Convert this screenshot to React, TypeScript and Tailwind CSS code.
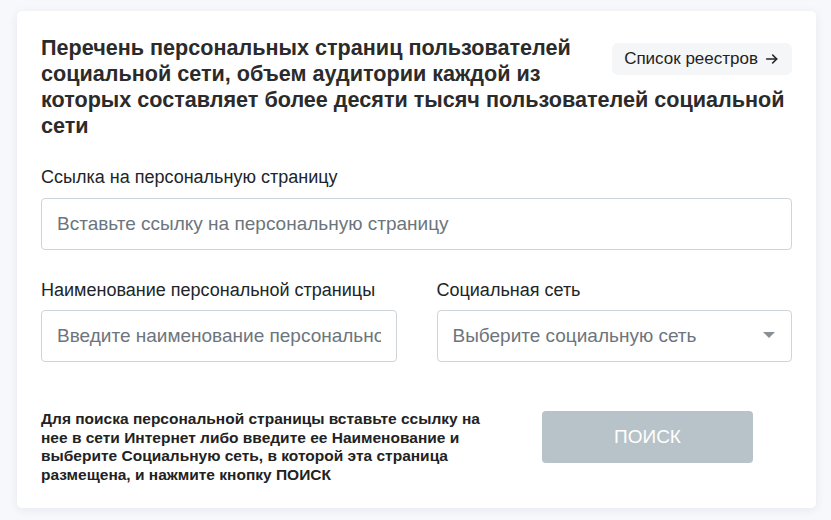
export default function App() {
  return (
    <div
      className="min-h-[520px] bg-[#f7f8fb] pl-[17px] pr-[15px] pt-[11px] pb-[13px]"
      style={{ fontFamily: '"Liberation Sans", Arial, sans-serif' }}
    >
      <div className="rounded-[5px] bg-white px-6 pt-6 pb-6 shadow-[0_2px_10px_rgba(30,50,90,0.08)]">
        <div className="text-[#2b2b2b]">
          <button className="float-right ml-5 mt-2 flex h-8 items-center gap-1.5 rounded-md bg-[#f5f6f8] px-3 text-[17px] text-[#222]">
            Список реестров
            <svg width="16" height="16" viewBox="0 0 24 24" fill="none" stroke="currentColor" strokeWidth="2.4" strokeLinecap="round" strokeLinejoin="round">
              <path d="M4 12h15" />
              <path d="M13 6l6 6-6 6" />
            </svg>
          </button>
          <h1 className="text-[21.6px] font-bold leading-[26px]">
            Перечень персональных страниц пользователей социальной сети, объем аудитории каждой из которых составляет более десяти тысяч пользователей социальной сети
          </h1>
        </div>

        <label className="mt-[26px] block text-[18px] leading-6 text-[#212529]">Ссылка на персональную страницу</label>
        <input
          className="mt-[9px] block h-[52px] w-full rounded border border-[#ced4da] px-[15px] text-[19px] text-[#212529] placeholder:text-[#6c757d] outline-none"
          placeholder="Вставьте ссылку на персональную страницу"
        />

        <div className="mt-7 grid grid-cols-2 gap-10">
          <div>
            <label className="block text-[18px] leading-6 text-[#212529]">Наименование персональной страницы</label>
            <input
              className="mt-2 block h-[52px] w-full rounded border border-[#ced4da] px-[15px] text-[19px] text-[#212529] placeholder:text-[#6c757d] outline-none"
              placeholder="Введите наименование персональной страницы"
            />
          </div>
          <div>
            <label className="block text-[18px] leading-6 text-[#212529]">Социальная сеть</label>
            <div className="mt-2 flex h-[52px] w-full items-center justify-between rounded border border-[#ced4da] pl-[15px] pr-4 text-[19px] text-[#6c757d]">
              <span>Выберите социальную сеть</span>
              <svg width="12" height="8" viewBox="0 0 12 8">
                <path d="M0 0h12L6 6z" fill="#8a8f94" />
              </svg>
            </div>
          </div>
        </div>

        <div className="mt-12 flex items-start">
          <p className="w-[460px] text-[15.5px] font-bold leading-[18.5px] text-[#222]">
            Для поиска персональной страницы вставьте ссылку на нее в сети Интернет либо введите ее Наименование и выберите Социальную сеть, в которой эта страница размещена, и нажмите кнопку ПОИСК
          </p>
          <button className="ml-[41px] mt-px h-[52px] w-[211px] rounded bg-[#b8c3c9] text-[19px] text-white">
            ПОИСК
          </button>
        </div>
      </div>
    </div>
  );
}
